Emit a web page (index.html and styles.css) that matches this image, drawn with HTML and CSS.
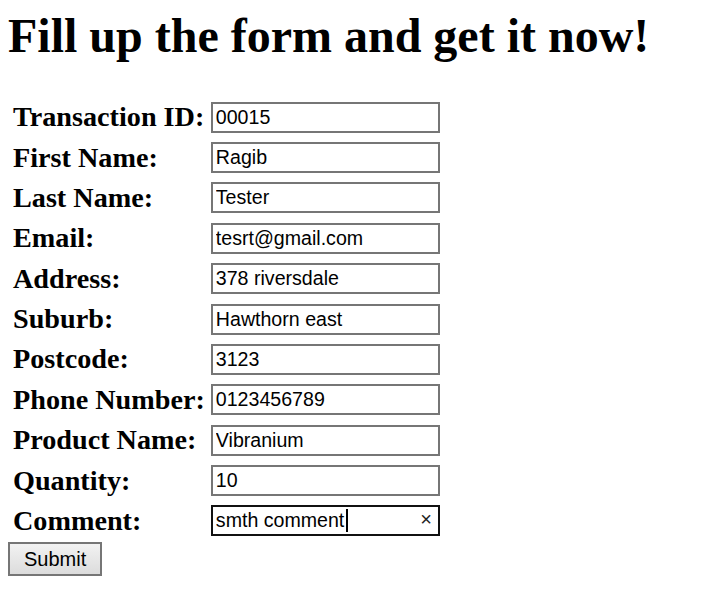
FILE: index.html
```html
<!DOCTYPE html>
<html>
<head>
<meta charset="utf-8">
<link rel="stylesheet" href="styles.css">
</head>
<body>
<h1 class="title">Fill up the form and get it now!</h1>
<form class="order-form">
  <table class="form-table">
    <tr><td class="lbl">Transaction ID:</td><td><input class="field" type="text" value="00015"></td></tr>
    <tr><td class="lbl">First Name:</td><td><input class="field" type="text" value="Ragib"></td></tr>
    <tr><td class="lbl">Last Name:</td><td><input class="field" type="text" value="Tester"></td></tr>
    <tr><td class="lbl">Email:</td><td><input class="field" type="text" value="tesrt@gmail.com"></td></tr>
    <tr><td class="lbl">Address:</td><td><input class="field" type="text" value="378 riversdale"></td></tr>
    <tr><td class="lbl">Suburb:</td><td><input class="field" type="text" value="Hawthorn east"></td></tr>
    <tr><td class="lbl">Postcode:</td><td><input class="field" type="text" value="3123"></td></tr>
    <tr><td class="lbl">Phone Number:</td><td><input class="field" type="text" value="0123456789"></td></tr>
    <tr><td class="lbl">Product Name:</td><td><input class="field" type="text" value="Vibranium"></td></tr>
    <tr><td class="lbl">Quantity:</td><td><input class="field" type="text" value="10"></td></tr>
    <tr><td class="lbl">Comment:</td><td><div class="field-wrap"><input class="field focused" type="text" value="smth comment"><span class="caret"></span><span class="clear">×</span></div></td></tr>
  </table>
  <button class="submit" type="button">Submit</button>
</form>
</body>
</html>
```
FILE: styles.css
```css
body {
  margin: 8px;
  font-family: "Liberation Serif", "Times New Roman", serif;
  color: #000;
  background: #fff;
}
.title {
  font-size: 48px;
  font-weight: bold;
  margin: 0 0 33px 0;
  line-height: 55px;
}
.form-table {
  border-collapse: separate;
  border-spacing: 2px;
}
.form-table td {
  padding: 3.2px 1px;
  vertical-align: middle;
}
.lbl {
  font-size: 28.2px;
  font-weight: bold;
  padding-left: 3px !important;
  padding-right: 3px !important;
  white-space: nowrap;
}
.field-wrap {
  position: relative;
}
.field {
  box-sizing: border-box;
  width: 229px;
  height: 31px;
  margin: 0;
  padding: 1px 3px;
  border: 2px solid #767676;
  font-family: "Liberation Sans", Arial, sans-serif;
  font-size: 19.6px;
  color: #000;
  background: #fff;
  display: block;
}
.field.focused {
  border-color: #111;
  outline: none;
}
.caret {
  position: absolute;
  left: 135px;
  top: 4px;
  width: 2px;
  height: 23px;
  background: #000;
}
.clear {
  position: absolute;
  right: 8px;
  top: 3px;
  font-family: "Liberation Sans", Arial, sans-serif;
  font-size: 20px;
  color: #222;
}
.submit {
  font-family: "Liberation Sans", Arial, sans-serif;
  font-size: 20px;
  padding: 3px 14px;
  height: 34px;
  width: 94px;
  border: 2px solid #767676;
  background: linear-gradient(#f2f2f2, #dcdcdc);
  color: #000;
  margin: 0;
}
```
